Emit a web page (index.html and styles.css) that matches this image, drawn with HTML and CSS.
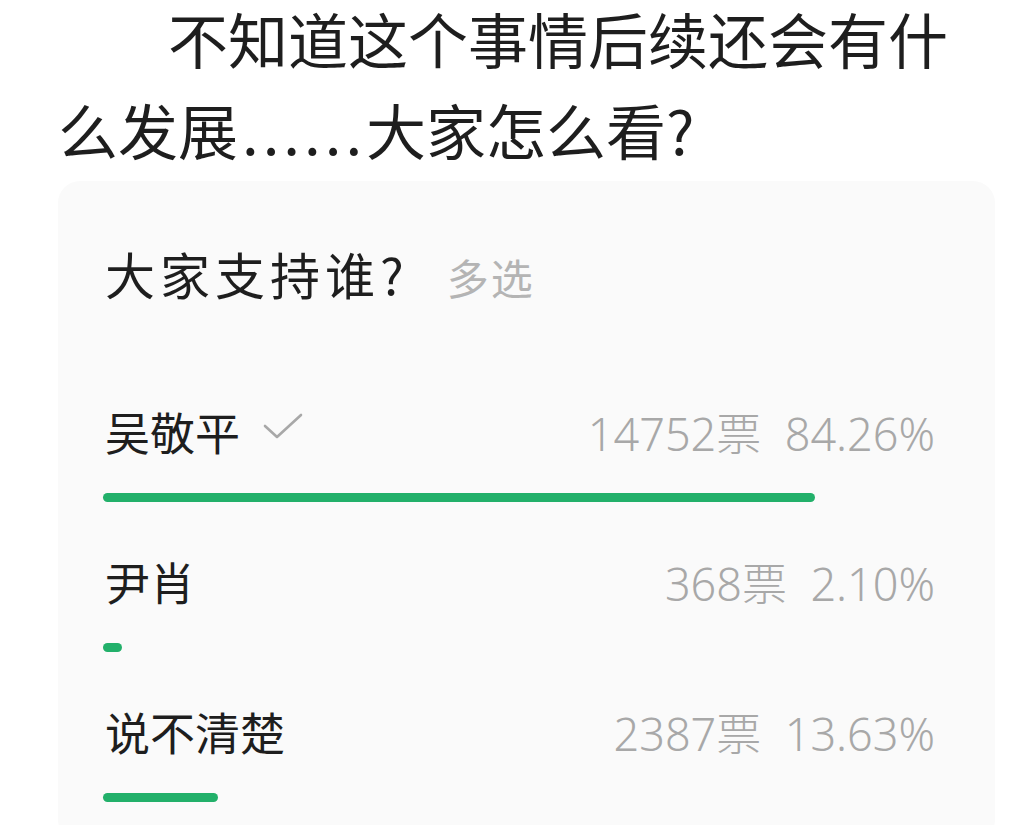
FILE: index.html
```html
<!DOCTYPE html>
<html lang="zh-CN">
<head>
    <meta charset="UTF-8">
    <meta name="viewport" content="width=device-width, initial-scale=1.0">
    <title>大家支持谁?</title>
    <link rel="stylesheet" href="styles.css">
</head>
<body>
    <p class="post">不知道这个事情后续还会有什么发展<span class="dots">......</span>大家怎么看?</p>

    <div class="poll">
        <div class="poll-title">大家支持谁?<span class="poll-type">多选</span></div>

        <div class="option">
            <div class="option-head">
                <span class="option-name">吴敬平
                    <svg class="check" width="42" height="30" viewBox="0 0 42 30">
                        <path d="M3 15 L15 26 L39 4" fill="none" stroke="#a8a8a8" stroke-width="2.6" stroke-linecap="round" stroke-linejoin="round"/>
                    </svg>
                </span>
                <span class="option-count">14752票&nbsp; 84.26%</span>
            </div>
            <div class="bar-track"><div class="bar" style="width: 84.26%"></div></div>
        </div>

        <div class="option">
            <div class="option-head">
                <span class="option-name">尹肖</span>
                <span class="option-count">368票&nbsp; 2.10%</span>
            </div>
            <div class="bar-track"><div class="bar" style="width: 2.10%"></div></div>
        </div>

        <div class="option">
            <div class="option-head">
                <span class="option-name">说不清楚</span>
                <span class="option-count">2387票&nbsp; 13.63%</span>
            </div>
            <div class="bar-track"><div class="bar" style="width: 13.63%"></div></div>
        </div>
    </div>
</body>
</html>
```

FILE: styles.css
```css
body {
    margin: 0;
    background: #fff;
    font-family: "Noto Sans CJK SC", "Noto Sans", sans-serif;
    color: #1e1e1e;
    overflow: hidden;
}
.post {
    margin: -8px 37px 0 58px;
    font-size: 60px;
    line-height: 91px;
    text-indent: 110px;
}
.dots {
    letter-spacing: 4px;
    margin-left: 4px;
}
.poll {
    margin: 7px 37px 0 58px;
    padding: 62px 47px 40px 45px;
    background: #fafafa;
    border-radius: 22px;
}
.poll-title {
    font-size: 50px;
    line-height: 60px;
    padding-left: 2px;
    letter-spacing: 5px;
}
.poll-type {
    margin-left: 38px;
    font-size: 42px;
    letter-spacing: 2px;
    color: #b4b4b4;
}
.option {
    margin-top: 96px;
}
.option + .option {
    margin-top: 51px;
}
.option-head {
    display: flex;
    justify-content: space-between;
    align-items: center;
    height: 56px;
    margin-right: 13px;
    padding-left: 2px;
}
.option-name {
    display: flex;
    align-items: center;
    font-size: 45px;
}
.check {
    margin-left: 22px;
    margin-top: -10px;
}
.option-count {
    font-family: "Noto Sans", "Noto Sans CJK SC", sans-serif;
    font-size: 45px;
    font-weight: 300;
    color: #a8a8a8;
}
.bar-track {
    margin-top: 34px;
    height: 9px;
}
.bar {
    height: 100%;
    background: #22b06a;
    border-radius: 5px;
    min-width: 19px;
}
```
